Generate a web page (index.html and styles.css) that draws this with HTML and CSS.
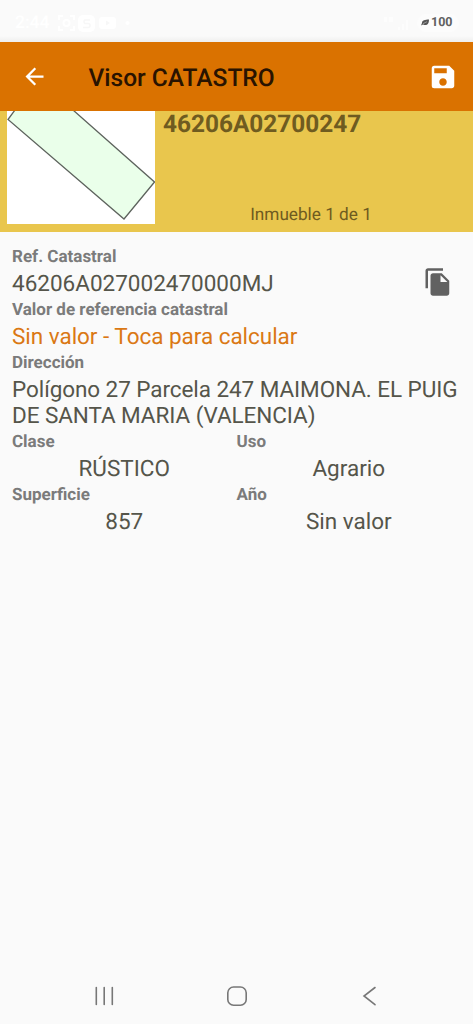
FILE: index.html
```
<!DOCTYPE html>
<html lang="es">
<head>
<meta charset="utf-8">
<title>Visor CATASTRO</title>
<link rel="stylesheet" href="styles.css">
</head>
<body>
<div class="screen">
  <div class="status">
    <span class="clock">2:44</span>
    <svg class="status-icons" width="78" height="20" viewBox="0 0 78 20">
      <g fill="none" stroke="#fff" stroke-width="2"><path d="M3 7V3h4M14 3h4v4M18 13v4h-4M7 17H3v-4"/><circle cx="10.500" cy="10" r="3"/></g>
      <rect x="22" y="2" width="17" height="17" rx="5" fill="#fff"/>
      <path d="M34 7h-5a2 2 0 0 0 0 3.500h3a2 2 0 0 1 0 4h-5" fill="none" stroke="#f7f7f7" stroke-width="1.500"/>
      <rect x="43" y="4" width="17" height="12" rx="3" fill="#fff"/>
      <path d="M50 7.500l4 2.500-4 2.500z" fill="#f7f7f7"/>
      <circle cx="71.500" cy="10" r="2" fill="#fff"/>
    </svg>
    <svg class="signal" width="28" height="18" viewBox="0 0 28 18" fill="#fdfdfd"><path d="M1 3h3v5H1zM6 3h4v5H6zM15 13h2v3h-2zM19 10h2v6h-2zM23 6h2v10h-2z"/></svg>
    <div class="battery">
      <svg width="8" height="7" viewBox="0 0 8 7"><path d="M1 4C1 1 4 .8 8 .5 8 4 7 6 4 6 3 6 2 5.500 2 5.500L0 6.500z" fill="#555"/><path d="M2 4.700L6 2.700" stroke="#ddd" stroke-width=".5"/></svg>
      <span>100</span>
    </div>
  </div>
  <header class="toolbar">
    <svg class="back" width="27" height="27" viewBox="0 0 24 24" fill="#fff"><path d="M20 11H7.830l5.590-5.590L12 4l-8 8 8 8 1.410-1.410L7.830 13H20z"/></svg>
    <h1 class="title">Visor CATASTRO</h1>
    <svg class="save" width="30" height="30" viewBox="0 0 24 24" fill="#fff"><path d="M17 3H5a2 2 0 0 0-2 2v14a2 2 0 0 0 2 2h14c1.100 0 2-.9 2-2V7zM12 19c-1.660 0-3-1.340-3-3s1.340-3 3-3 3 1.340 3 3-1.340 3-3 3zM15 9H5V5h10z"/></svg>
  </header>
  <section class="summary">
    <svg class="parcel" width="148" height="113" viewBox="0 0 148 113">
      <rect width="148" height="113" fill="#fff"/>
      <path d="M8-1L1 8.500 117 108 147.500 71 66-1z" fill="#eaffea"/>
      <path d="M8-1L1 8.500 117 108 147.500 71 66-1" fill="none" stroke="#5d635d" stroke-width="1.300"/>
    </svg>
    <div class="summary-text">
      <div class="parcel-ref">46206A02700247</div>
      <div class="count">Inmueble 1 de 1</div>
    </div>
  </section>
  <main class="details">
    <div class="ref-row">
      <div>
        <div class="label">Ref. Catastral</div>
        <div class="value">46206A027002470000MJ</div>
      </div>
      <svg class="copy" width="30" height="30" viewBox="0 0 24 24" fill="#616161"><path d="M16 1H4c-1.100 0-2 .9-2 2v14h2V3h12zM15 5H8c-1.100 0-1.990.9-1.990 2L6 21c0 1.100.89 2 1.990 2H19c1.100 0 2-.9 2-2V11zM14 12V6.500l5.500 5.500z"/></svg>
    </div>
    <div class="label">Valor de referencia catastral</div>
    <div class="value link">Sin valor - Toca para calcular</div>
    <div class="label">Dirección</div>
    <div class="value address">Polígono 27 Parcela 247 MAIMONA. EL PUIG<br>DE SANTA MARIA (VALENCIA)</div>
    <div class="grid">
      <div><div class="label">Clase</div><div class="value centered">RÚSTICO</div></div>
      <div><div class="label">Uso</div><div class="value centered">Agrario</div></div>
      <div><div class="label">Superficie</div><div class="value centered">857</div></div>
      <div><div class="label">Año</div><div class="value centered">Sin valor</div></div>
    </div>
  </main>
  <nav class="navbar">
    <svg width="24" height="24" viewBox="0 0 24 24" stroke="#777" stroke-width="1.600" stroke-linecap="round"><path d="M4.300 3.500v17M12.200 3.500v17M20.300 3.500v17"/></svg>
    <svg width="24" height="24" viewBox="0 0 24 24" fill="none" stroke="#777" stroke-width="1.600"><rect x="2.800" y="3" width="18.400" height="18.200" rx="5.800"/></svg>
    <svg width="24" height="24" viewBox="0 0 24 24" fill="none" stroke="#777" stroke-width="1.600" stroke-linecap="round"><path d="M17 3.500L6 12l11 8.700"/></svg>
  </nav>
</div>
</body>
</html>
```
FILE: styles.css
```
* { box-sizing: border-box; }
body {
  margin: 0;
  background: #fafafa;
  font-family: Roboto, "Noto Sans", sans-serif;
  text-rendering: geometricPrecision;
}
svg { display: block; flex: none; }
.screen {
  width: 473px;
  height: 1024px;
  display: flex;
  flex-direction: column;
  background: #fafafa;
  overflow: hidden;
}
.status {
  height: 42px;
  flex: none;
  display: flex;
  align-items: center;
  padding: 3px 14px 0 15px;
  background: linear-gradient(#fafafa 36px, #efefee);
}
.clock {
  width: 41px;
  font-size: 17.5px;
  font-weight: 500;
  color: #fff;
}
.signal { margin-left: auto; }
.battery {
  width: 42px;
  height: 18px;
  margin-left: 6px;
  padding-left: 4px;
  display: flex;
  align-items: center;
  gap: 2px;
  border-radius: 9px;
  background: #fcfcfc;
  font-size: 12.5px;
  font-weight: 700;
  color: #606060;
}
.toolbar {
  height: 69px;
  flex: none;
  display: flex;
  align-items: center;
  padding: 0 15px 0 21px;
  background: #da7200;
}
.title {
  flex: 1;
  margin: 2px 0 0 40.5px;
  font-size: 24.5px;
  font-weight: 500;
  line-height: 28px;
  color: #291300;
}
.summary {
  height: 121px;
  flex: none;
  display: flex;
  padding: 0 14px 0 7px;
  background: #e9c64d;
}
.summary-text {
  flex: 1;
  margin-left: 8px;
  display: flex;
  flex-direction: column;
  color: #6f5b20;
}
.parcel-ref {
  font-size: 24.4px;
  line-height: 28px;
  font-weight: 700;
  margin-top: -1px;
}
.count {
  margin-top: 67px;
  font-size: 17.2px;
  line-height: 20px;
  text-align: center;
}
.details {
  flex: 1;
  padding: 12px 12px 0;
}
.ref-row {
  display: flex;
  justify-content: space-between;
  height: 53px;
}
.copy { margin: 23px 8px 0 0; }
.label {
  font-size: 17px;
  line-height: 27px;
  font-weight: 700;
  color: #7b7b7b;
}
.value {
  font-size: 22.5px;
  line-height: 26px;
  color: #55554a;
  white-space: nowrap;
}
.link {
  color: #da7814;
  letter-spacing: -0.03px;
}
.address { letter-spacing: -0.07px; }
.centered { text-align: center; }
.grid {
  display: grid;
  grid-template-columns: 1fr 1fr;
}
.navbar {
  height: 56px;
  flex: none;
  display: flex;
  justify-content: space-between;
  align-items: center;
  padding: 0 91px 0 92px;
}
```
